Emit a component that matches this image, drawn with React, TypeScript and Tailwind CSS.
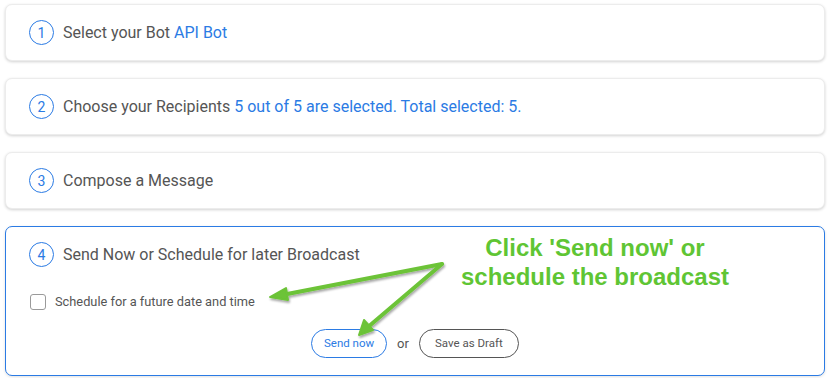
import React from "react";

const font = { fontFamily: "Roboto, 'Liberation Sans', sans-serif" };

function Num({ n }: { n: number }) {
  return (
    <div className="w-[25px] h-[25px] rounded-full border border-[#2b7be4] flex items-center justify-center text-[#2b7be4] text-[14px] leading-none shrink-0">
      {n}
    </div>
  );
}

function Card({ n, children }: { n: number; children: React.ReactNode }) {
  return (
    <div className="h-[57px] rounded-[7px] bg-white border border-[#ececec] shadow-[0_1px_3px_rgba(0,0,0,0.18)] flex items-center pl-[23px] gap-[9px]">
      <Num n={n} />
      <div className="text-[16px] text-[#555555]">{children}</div>
    </div>
  );
}

export default function App() {
  return (
    <div className="relative w-[832px] h-[378px] bg-white overflow-hidden" style={font}>
      <div className="pl-[5px] pt-[4px] w-[825px] flex flex-col gap-[17px]">
        <Card n={1}>
          Select your Bot <span className="text-[#2b7be4]">API Bot</span>
        </Card>
        <Card n={2}>
          Choose your Recipients{" "}
          <span className="text-[#2b7be4]">5 out of 5 are selected. Total selected: 5.</span>
        </Card>
        <Card n={3}>Compose a Message</Card>
        <div className="rounded-[7px] bg-white border border-[#2b7be4] shadow-[0_1px_3px_rgba(0,0,0,0.12)] pl-[23px] pt-[15px] pb-[17px] flex flex-col">
          <div className="flex items-center gap-[9px]">
            <Num n={4} />
            <div className="text-[16px] text-[#555555]">Send Now or Schedule for later Broadcast</div>
          </div>
          <div className="flex items-center gap-[9px] mt-[25px] pl-[1px]">
            <div className="w-[16px] h-[16px] rounded-[3px] border border-[#9a9a9a] bg-white" />
            <div className="text-[12.8px] text-[#555555]">Schedule for a future date and time</div>
          </div>
          <div className="flex items-center justify-center gap-[10px] mt-[18px] pr-[23px]">
            <div className="h-[29px] w-[76px] rounded-full border border-[#2b7be4] text-[#2b7be4] text-[11.5px] flex items-center justify-center">
              Send now
            </div>
            <div className="text-[13px] text-[#555555]">or</div>
            <div className="h-[29px] w-[100px] rounded-full border border-[#555] text-[#555555] text-[11.5px] flex items-center justify-center">
              Save as Draft
            </div>
          </div>
        </div>
      </div>

      <svg className="absolute left-0 top-0" width="832" height="378" viewBox="0 0 832 378">
        <defs>
          <filter id="sh" x="-20%" y="-20%" width="140%" height="140%">
            <feDropShadow dx="1" dy="2" stdDeviation="1.2" floodColor="#000" floodOpacity="0.35" />
          </filter>
        </defs>
        <g filter="url(#sh)" stroke="#6cc337" strokeWidth="4" strokeLinecap="round" fill="#6cc337" strokeLinejoin="round">
          <line x1="442" y1="264" x2="282" y2="295" />
          <polygon points="270,297 286,288 288,300" strokeWidth="2" />
          <line x1="442" y1="264" x2="368" y2="327" />
          <polygon points="359,335 364,320 373,330" strokeWidth="2" />
        </g>
      </svg>

      <div
        className="absolute left-[440px] top-[233px] w-[310px] text-center text-[#5fc534] font-bold text-[24px] leading-[29px]"
        style={{ fontFamily: "'Liberation Sans', Arial, sans-serif" }}
      >
        Click 'Send now' or
        <br />
        schedule the broadcast
      </div>
    </div>
  );
}
